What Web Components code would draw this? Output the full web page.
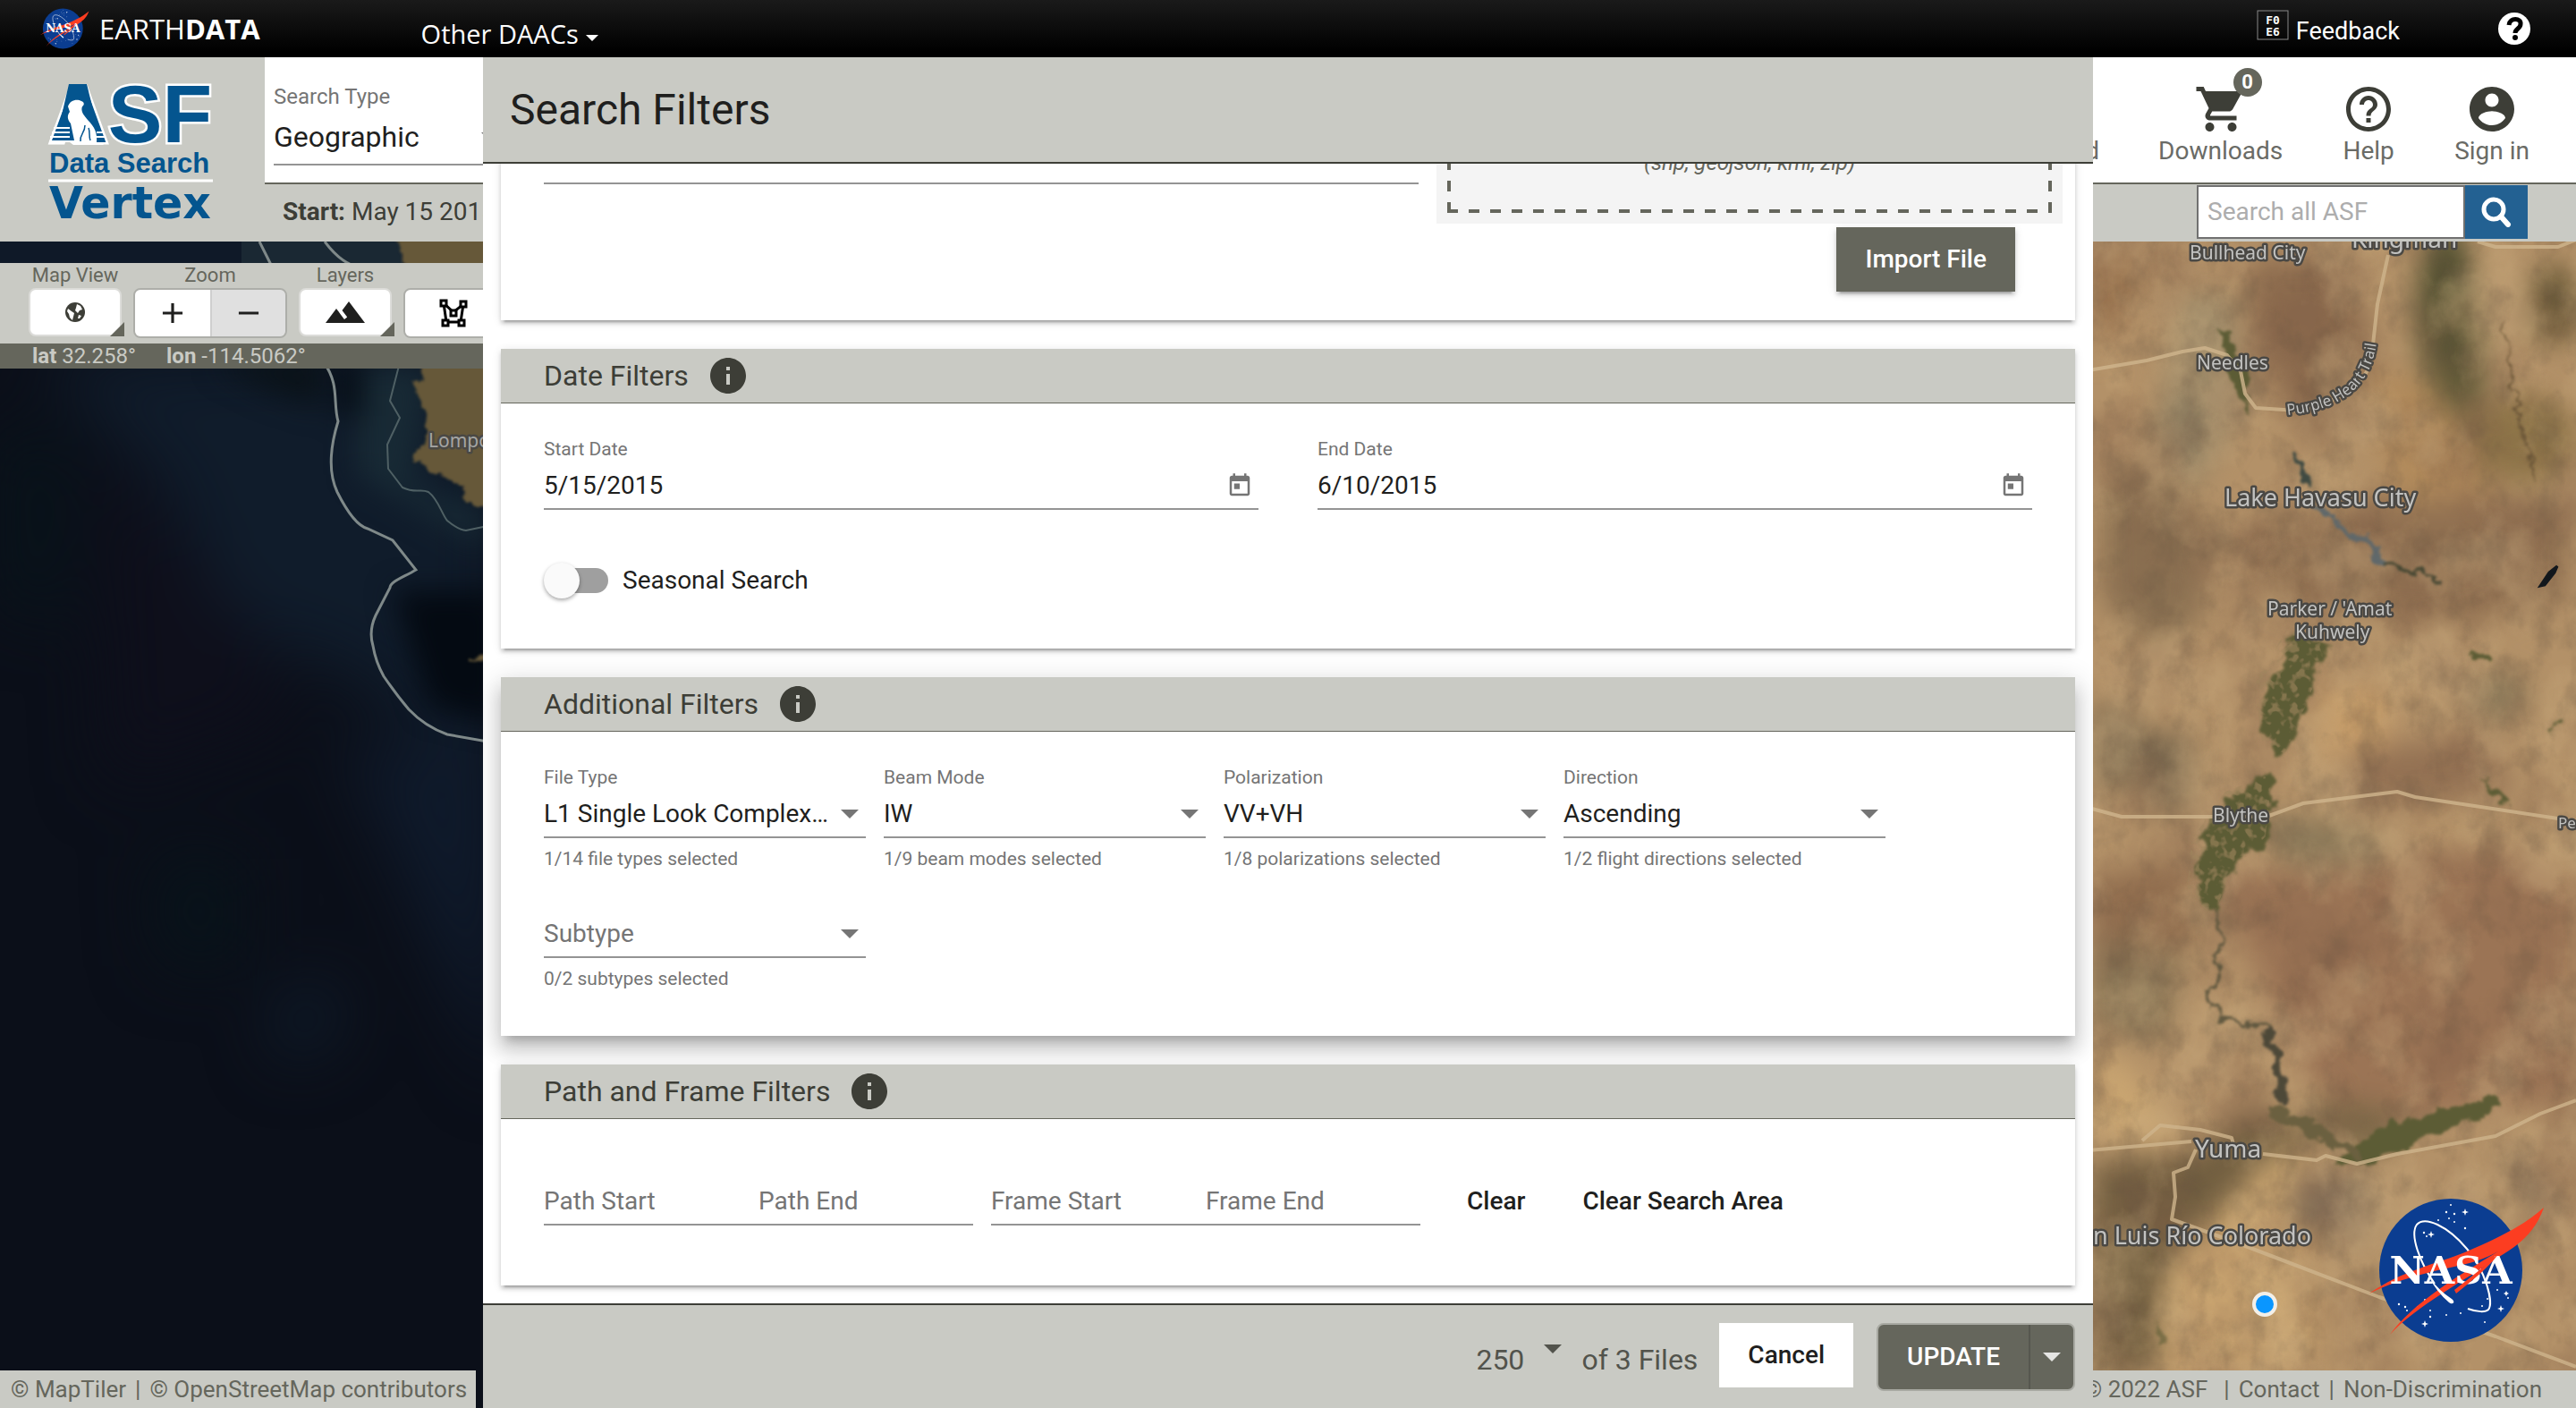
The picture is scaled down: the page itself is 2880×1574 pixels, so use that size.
<!DOCTYPE html>
<html lang="en">
<head>
<meta charset="utf-8">
<title>ASF Data Search Vertex</title>
<style>
  html, body { margin: 0; height: 100%; }
  body {
    font-family: Roboto, "Liberation Sans", sans-serif;
    font-size: 28px;
    line-height: 32px;
    color: #1f1f1e;
    overflow: hidden;
    --grey: #c9cac4;
    --olive: #65665c;
    --dark: #3d3e37;
    --muted: #757575;
    --rule: #949494;
  }
</style>
</head>
<body>
<vertex-app></vertex-app>
<script>
const reset = `*,*::before{box-sizing:border-box}button,input,select{font:inherit;color:inherit;margin:0;padding:0;border:0;background:none;border-radius:0;appearance:none;outline:0}a{color:inherit;text-decoration:none}svg{display:block}h1,h2,p{margin:0;font-weight:400}`;

function define(name, render) {
  customElements.define(name, class extends HTMLElement {
    constructor() { super(); this.attachShadow({ mode: "open" }); }
    connectedCallback() {
      const tpl = document.createElement("template");
      tpl.innerHTML = `<style>${reset}</style>` + render(this);
      this.shadowRoot.replaceChildren(tpl.content.cloneNode(true));
    }
  });
}

const icons = {
  cart: "M7 18c-1.1 0-1.99.9-1.99 2S5.9 22 7 22s2-.9 2-2-.9-2-2-2zM1 2v2h2l3.6 7.59-1.35 2.45c-.16.28-.25.61-.25.96 0 1.1.9 2 2 2h12v-2H7.42c-.14 0-.25-.11-.25-.25l.03-.12.9-1.63h7.45c.75 0 1.41-.41 1.75-1.03l3.58-6.49A1.003 1.003 0 0 0 20 4H5.21l-.94-2H1zm16 16c-1.1 0-1.99.9-1.99 2s.89 2 1.99 2 2-.9 2-2-.9-2-2-2z",
  help: "M11 18h2v-2h-2v2zm1-16C6.48 2 2 6.48 2 12s4.48 10 10 10 10-4.48 10-10S17.52 2 12 2zm0 18c-4.41 0-8-3.59-8-8s3.59-8 8-8 8 3.59 8 8-3.59 8-8 8zm0-14c-2.21 0-4 1.79-4 4h2c0-1.1.9-2 2-2s2 .9 2 2c0 2-3 1.75-3 5h2c0-2.25 3-2.5 3-5 0-2.21-1.79-4-4-4z",
  person: "M12 2C6.48 2 2 6.48 2 12s4.48 10 10 10 10-4.48 10-10S17.52 2 12 2zm0 3c1.66 0 3 1.34 3 3s-1.34 3-3 3-3-1.34-3-3 1.34-3 3-3zm0 14.2c-2.5 0-4.71-1.28-6-3.22.03-1.99 4-3.08 6-3.08 1.99 0 5.97 1.09 6 3.08-1.29 1.94-3.5 3.22-6 3.22z",
  info: "M12 2C6.48 2 2 6.48 2 12s4.48 10 10 10 10-4.48 10-10S17.52 2 12 2zm1 15h-2v-6h2v6zm0-8h-2V7h2v2z",
  today: "M19 3h-1V1h-2v2H8V1H6v2H5c-1.11 0-1.99.9-1.99 2L3 19c0 1.1.89 2 2 2h14c1.1 0 2-.9 2-2V5c0-1.1-.9-2-2-2zm0 16H5V8h14v11zM7 10h5v5H7z",
  add: "M19 13h-6v6h-2v-6H5v-2h6V5h2v6h6v2z",
  remove: "M19 13H5v-2h14v2z",
  terrain: "M14 6l-3.75 5 2.85 3.8-1.6 1.2C9.81 13.75 7 10 7 10l-6 8h22L14 6z"
};
const icon = (n, s, c = "currentColor") => `<svg class="icon" width="${s}" height="${s}" viewBox="0 0 24 24" fill="${c}" aria-hidden="true"><path d="${icons[n]}"/></svg>`;
const arrow = `<svg class="arrow" width="20" height="10" viewBox="0 0 20 10" fill="currentColor" aria-hidden="true"><path d="M0 0h20L10 10z"/></svg>`;

define("nasa-logo", () => `
<style>:host{display:block}svg{width:100%;height:100%;overflow:visible}</style>
<svg viewBox="0 0 200 164" role="img" aria-label="NASA">
  <circle cx="94" cy="82" r="80" fill="#0b3d91"/>
  <g fill="#fff">
    <circle cx="94" cy="9" r="1"/><circle cx="89" cy="17" r="1.2"/><circle cx="98" cy="19" r="1.2"/><circle cx="80" cy="26" r="1"/><circle cx="92" cy="24" r="1"/><circle cx="98" cy="28" r="1"/><circle cx="110" cy="35" r="1.2"/><circle cx="64" cy="40" r="1.2"/><circle cx="67" cy="44" r="1"/>
    <path d="M110 13l1 3 3 1-3 1-1 3-1-3-3-1 3-1zM72 38l1 3 3 1-3 1-1 3-1-3-3-1 3-1zM65 138l1 3 3 1-3 1-1 3-1-3-3-1 3-1zM150 121l1 3 3 1-3 1-1 3-1-3-3-1 3-1zM156 105l1 2 2 1-2 1-1 2-1-2-2-1 2-1z"/>
    <circle cx="36" cy="120" r="1.2"/><circle cx="43" cy="123" r="1.2"/><circle cx="45" cy="127" r="1"/><circle cx="57" cy="123" r="1"/><circle cx="65" cy="115" r="1"/><circle cx="71" cy="127" r="1"/><circle cx="71" cy="134" r="1.2"/><circle cx="89" cy="132" r="1"/><circle cx="105" cy="130" r="1"/><circle cx="132" cy="140" r="1"/><circle cx="129" cy="122" r="1"/><circle cx="135" cy="114" r="1"/><circle cx="146" cy="104" r="1"/><circle cx="158" cy="113" r="1"/>
  </g>
  <path d="M113 125c11 4 20 4 23 1 6-7-2-42-24-68S65 21 56 31c-8 11 3 42 20 66" fill="none" stroke="#fff" stroke-width="2"/>
  <path d="M3 108C40 82 76 76 112 61c40-17 66-31 86-49-10 28-27 41-50 55C112 92 55 122 26 154c25-35 76-66 134-101-36 24-56 22-92 32-27 7-45 13-65 23z" fill="#fc3d21"/>
  <path d="M70 90q11 15 25 24c5 4 1 7-3 4Q78 106 70 90z" fill="#fff"/>
  <text x="94" y="97" text-anchor="middle" font-family="DejaVu Serif,serif" font-weight="700" font-size="43" fill="#fff">NASA</text>
  <path d="M98 104C120 87 140 72 152 57c-14 22-34 36-52 51z" fill="#fc3d21"/>
</svg>`);

define("top-bar", () => `
<style>
:host{display:flex;align-items:center;height:64px;flex:none;padding:0 50px 0 44px;background:linear-gradient(#1a1a1a,#000 90%);color:#fff;font-family:"Open Sans",sans-serif}
nasa-logo{width:56px;height:46px;margin-right:11px}
.brand{font-size:31px;margin-right:180px}
.daac{display:flex;align-items:center;gap:8px;padding-top:12px;font-size:29px}
.daac svg{margin-top:8px}
.fb{margin-left:auto;display:flex;gap:8px;align-items:center;font-family:Roboto,sans-serif;font-size:27px}
.fb span{padding-top:6px}.fb svg{margin-bottom:8px}
.q{margin-left:110px}
</style>
<nasa-logo></nasa-logo>
<a class="brand" href="#">EARTH<b>DATA</b></a>
<button class="daac">Other DAACs <svg width="14" height="7" viewBox="0 0 14 7" fill="#fff"><path d="M0 0h14L7 7z"/></svg></button>
<a class="fb" href="#"><svg width="36" height="34" viewBox="0 0 36 34"><rect x="1" y="1" width="34" height="32" fill="none" stroke="#888"/><text x="18" y="16" text-anchor="middle" fill="#fff" font-family="DejaVu Sans Mono,monospace" font-weight="700" font-size="13">F0</text><text x="18" y="29" text-anchor="middle" fill="#fff" font-family="DejaVu Sans Mono,monospace" font-weight="700" font-size="13">E6</text></svg><span>Feedback</span></a>
<button class="q" aria-label="Help"><svg width="37" height="37" viewBox="0 0 37 37"><circle cx="18" cy="18" r="18" fill="#fff"/><path d="M12 14c1-9 14-8 13-1 0 5-6 5-6 10" fill="none" stroke="#000" stroke-width="5"/><circle cx="19" cy="28" r="3" fill="#000"/></svg></button>`);

define("vertex-logo", () => `
<style>:host{display:block}</style>
<svg width="200" height="190" viewBox="0 -16 200 190" role="img" aria-label="ASF Data Search Vertex">
  <g fill="#04558f">
    <text x="3" y="71" font-family="Liberation Sans,sans-serif" font-weight="700" font-size="91" stroke="#fff" stroke-width="5" paint-order="stroke">ASF</text>
    <path d="M25 6h20l16 65H10z"/>
    <text x="3" y="105" font-family="Liberation Sans,sans-serif" font-weight="700" font-size="31">Data Search</text>
    <text x="3" y="156" font-family="DejaVu Sans,sans-serif" font-weight="700" font-size="49">Vertex</text>
  </g>
  <path d="M2 114h184" stroke="#fff" stroke-width="3"/>
  <path d="M8 55h18M6 60h20M4 65h22M3 70h28M56 60h8M56 65h10" stroke="#fff" stroke-width="2"/>
  <path d="M24 31c2-7 10-9 15-6 3 1 4 4 1 6-2 5 1 9 6 15 8 8 11 15 10 25h6l2 3H30l-4-3 5-2-4-19c-4-5-4-9-1-13z" fill="#fff"/>
  <path d="M38 70c-1-8 5-9 5-18M47 55c2 5 0 9 2 14" stroke="#04558f" stroke-width="1.5" fill="none"/>
</svg>`);

define("site-header", () => `
<style>
:host{display:flex;flex:none;background:var(--grey)}
.logo{width:296px;padding:8px 0 0 52px}
.main{flex:1;min-width:0}
.row1{display:flex;justify-content:space-between;height:142px;background:#fff;border-bottom:2px solid var(--olive)}
.type{display:block;width:270px;padding:30px 0 0 10px;color:var(--muted);font-size:24px;line-height:28px}
.sel{display:grid;align-items:center;margin-top:13px;padding-bottom:12px;border-bottom:2px solid var(--rule)}
.sel select{grid-area:1/1;font-size:32px;line-height:36px;height:36px;color:#1f1f1e}
.sel .arrow{grid-area:1/1;justify-self:end;margin-right:8px}
nav{display:flex;gap:66px;padding:28px 52px 0 0;color:#6a6b66}
nav a{display:flex;flex-direction:column;align-items:center;gap:1px;position:relative}
nav svg{color:var(--dark)}
.badge{position:absolute;left:50%;top:-16px;margin-left:14px;width:32px;height:32px;border-radius:50%;background:var(--olive);color:#fff;font-size:22px;font-weight:700;text-align:center}
.row2{display:flex;justify-content:space-between;align-items:center;height:64px;padding:0 54px 2px 20px;color:var(--dark)}
form{display:flex;height:60px}
input{width:300px;background:#fff;border:2px solid #707070;padding:0 10px}
input::placeholder{color:#adadad;opacity:1}
form button{width:70px;background:#236192;display:grid;place-items:center}
</style>
<div class="logo"><vertex-logo></vertex-logo></div>
<div class="main">
  <div class="row1">
    <label class="type">Search Type<span class="sel"><select><option>Geographic</option></select>${arrow}</span></label>
    <nav>
      <a href="#">${icon("person", 60)}On Demand</a>
      <a href="#">${icon("cart", 60)}<span class="badge">0</span>Downloads</a>
      <a href="#">${icon("help", 60)}Help</a>
      <a href="#">${icon("person", 60)}Sign in</a>
    </nav>
  </div>
  <div class="row2">
    <p><b>Start:</b> May 15 2015</p>
    <form><input type="text" placeholder="Search all ASF" aria-label="Search all ASF"><button type="button" aria-label="Search"><svg width="34" height="34" viewBox="0 0 34 34" fill="none" stroke="#fff"><circle cx="14" cy="14" r="11" stroke-width="5"/><path d="M22 22l8 9" stroke-width="6" stroke-linecap="round"/></svg></button></form>
  </div>
</div>`);

define("map-art", () => `
<style>:host{display:block}svg{width:100%;height:100%}filter{color-interpolation-filters:sRGB}text{font-family:"Noto Sans","Open Sans",sans-serif;fill:#c2c2c0;stroke:#4a4844;stroke-width:5px;paint-order:stroke;stroke-linejoin:round}</style>
<svg viewBox="0 270 2880 1304" preserveAspectRatio="xMidYMid slice" aria-label="Satellite map">
  <defs>
    <filter id="b30" x="-50%" y="-50%" width="200%" height="200%"><feGaussianBlur stdDeviation="16"/></filter>
    <filter id="b60" x="-50%" y="-50%" width="200%" height="200%"><feGaussianBlur stdDeviation="36"/></filter>
    <filter id="rough" x="-20%" y="-20%" width="140%" height="140%"><feTurbulence type="fractalNoise" baseFrequency=".05" numOctaves="4" seed="4" result="n"/><feDisplacementMap in="SourceGraphic" in2="n" scale="24" xChannelSelector="R" yChannelSelector="G"/><feGaussianBlur stdDeviation="1.5"/></filter>
    <filter id="patch" x="0" y="0" width="100%" height="100%"><feTurbulence type="fractalNoise" baseFrequency=".011 .009" numOctaves="6" seed="11"/><feColorMatrix values="0 0 0 0 .5  0 0 0 0 .37  0 0 0 0 .28  3.4 0 0 0 -1.5"/></filter>
    <filter id="light" x="0" y="0" width="100%" height="100%"><feTurbulence type="fractalNoise" baseFrequency=".012 .01" numOctaves="6" seed="29"/><feColorMatrix values="0 0 0 0 .8  0 0 0 0 .68  0 0 0 0 .5  0 3.4 0 0 -1.5"/></filter>
    <filter id="grain" x="0" y="0" width="100%" height="100%"><feTurbulence type="fractalNoise" baseFrequency=".03 .022" numOctaves="5" seed="3"/><feColorMatrix values="0 0 0 0 .38  0 0 0 0 .31  0 0 0 0 .24  0 3 0 0 -1.4"/></filter>
    <filter id="field" x="-10%" y="-10%" width="120%" height="120%"><feTurbulence type="fractalNoise" baseFrequency=".1" numOctaves="2" seed="8"/><feColorMatrix values="0 0 0 0 .62  0 0 0 0 .52  0 0 0 0 .37  0 6 0 0 -3" result="n"/><feComposite in="n" in2="SourceGraphic" operator="in"/></filter>
    <clipPath id="cl"><rect x="0" y="270" width="1400" height="1304"/></clipPath>
    <clipPath id="cr"><rect x="2300" y="270" width="580" height="1304"/></clipPath>
  </defs>
  <g clip-path="url(#cl)">
    <rect y="270" width="1400" height="1304" fill="#0b0f19"/>
    <g filter="url(#b60)">
      <path d="M40 400L560 380V900L400 760 260 700 180 540z" fill="#101c2b"/>
      <path d="M380 820L560 860v360z" fill="#0f1a2b"/>
      <path d="M0 470L80 500 70 700 0 680zM170 960h100v120h-90z" fill="#08131a"/>
      <path d="M100 500l120 120 120 180-220 80z" fill="#0e0f1b"/>
      <path d="M300 1130l70-40 10 60-60 40z" fill="#0f1c2b"/>
    </g>
    <g filter="url(#b30)">
      <path d="M240 405L360 395v60l-60-20z" fill="#0a1218"/>
      <path d="M400 411h80l-20 130 80 30v40L400 530z" fill="#182a35"/>
      <path d="M440 660h120v150l-80-20z" fill="#040a12"/>
      <path d="M380 405h25v60h-25z" fill="#040a12"/>
    </g>
    <rect x="0" y="270" width="540" height="26" fill="#0f1928"/>
    <rect x="270" y="270" width="180" height="26" fill="#1a2833"/>
    <g fill="#665839" filter="url(#rough)"><path d="M438 252h120v60h-95zM476 390L465 435 478 466 464 518 506 536 522 564H600V390zM524 737q12-10 40-4v8z"/></g>
    <g fill="none" stroke="#7f8989" stroke-width="3">
      <path d="M290 270L303 296M363 270C378 290 390 296 403 300"/>
      <path d="M362 405C380 430 372 450 378 471C366 510 370 535 377 550C388 572 400 588 411 591L439 604 465 637C452 645 436 650 436 657L420 688Q412 705 417 722 420 740 429 756C440 772 446 780 457 793Q475 812 500 821L545 829"/>
      <path d="M447 405L436 448 447 467 433 497 434 524 450 545C465 552 470 546 479 550 490 558 494 575 500 582Q512 592 521 593L545 588" stroke="#4f6064" stroke-width="2"/>
    </g>
    <text x="479" y="500" font-size="21" style="fill:#a5a5a3">Lompoc</text>
  </g>
  <g clip-path="url(#cr)">
    <rect x="2300" y="270" width="580" height="1304" fill="#b39168"/>
    <g filter="url(#b30)">
      <path d="M2350 540l50-30 70 80-10 110-60 30-50-60z" fill="#8b7152"/>
      <path d="M2510 290l110 0 40 110-60 110-50-60-30-80z" fill="#8b6a4d"/>
      <path d="M2340 280h60v60l-60 60z" fill="#946e4b"/>
      <path d="M2440 330l50 0 20 120-60 100-40-60z" fill="#958465"/>
      <path d="M2650 420h110l30 160-110 10z" fill="#b18a5b"/>
      <path d="M2480 590l190-30 200 0v110l-120 30-200-20z" fill="#907051"/>
      <path d="M2600 760h70v90l-80 5z" fill="#c59c69"/>
      <path d="M2620 840l160-20 30 70-190 10z" fill="#937153"/>
      <path d="M2340 790h50v90h-50zM2390 820h60v90l-50-10z" fill="#7b694f"/>
      <path d="M2520 910l120 10 40 50-40 20-90-30z" fill="#8b7959"/>
      <path d="M2480 980L2800 950 2880 990V1230L2640 1260 2560 1180z" fill="#9b7455"/>
      <path d="M2340 980l100-20 20 90-110 40z" fill="#906d4e"/>
      <path d="M2340 1050l100 20-20 90-80-10z" fill="#887555"/>
      <path d="M2340 1170l40 20 60 90-100-10z" fill="#c9a571"/>
      <path d="M2340 1300l110-10 70-50 60 30-50 90-90 20-30 150h-70z" fill="#715e40"/>
      <path d="M2420 1420l120-130 60 0v240h-190z" fill="#c9a470"/>
      <path d="M2570 1310l80 10-10 70-80-20zM2790 1270l60 60-10 40z" fill="#83715a"/>
      <path d="M2590 1230l90 10-10 50-90-20z" fill="#7a6747"/>
      <ellipse cx="2735" cy="345" rx="32" ry="95" fill="#4f4e2f"/><ellipse cx="2752" cy="400" rx="26" ry="70" fill="#5b5735"/>
      <ellipse cx="2855" cy="340" rx="30" ry="45" fill="#6a5a38"/><ellipse cx="2820" cy="490" rx="60" ry="50" fill="#8d7448"/>
      <ellipse cx="2790" cy="780" rx="35" ry="25" fill="#887758"/>
    </g>
    <rect x="2300" y="270" width="580" height="1304" filter="url(#patch)" opacity=".32"/>
    <rect x="2300" y="270" width="580" height="1304" filter="url(#light)" opacity=".38"/>
    <rect x="2300" y="270" width="580" height="1304" filter="url(#grain)" opacity=".25"/>
    <g fill="#5c5c35" filter="url(#rough)">
      <path d="M2562 712L2604 720 2584 774 2562 832 2546 844 2530 823 2530 765 2552 745z"/>
      <path d="M2540 865L2540 906 2533 935 2502 964 2481 1018 2456 998 2461 939 2493 890z"/>
      <path d="M2478 370l10 20 8 40 18 30-4-40-18-50z"/>
      <path d="M2612 1298l40-34 130-38 14 12-110 45-50 22z"/>
      <path d="M2766 728h18v10h-18zM2772 870l34 26-8 4zM2852 818l12-16v9z"/>
      <path d="M2412 1476l12 26-12 2z" opacity=".6"/>
    </g>
    <path d="M2556 705L2605 715 2580 784 2554 842 2530 834 2520 765zM2540 865L2533 935 2495 974 2474 1024 2445 998 2450 939 2488 885z" fill="#fff" filter="url(#field)" opacity=".6"/>
    <g fill="none" filter="url(#rough)" stroke-linecap="round">
      <path d="M2478 1015L2482 1060 2478 1100 2471 1112 2483 1138 2533 1147 2545 1175" stroke="#5f573f" stroke-width="4"/>
      <path d="M2534 1155l12 20 4 55" stroke="#4d4838" stroke-width="10"/>
      <path d="M2545 1242l40 20 50 30" stroke="#6b6040" stroke-width="14"/>
      <path d="M2567 505L2582 540" stroke="#3f4a42" stroke-width="5"/>
      <path d="M2584 560L2624 590 2669 630" stroke="#60686a" stroke-width="7"/>
      <path d="M2669 630l60 18" stroke="#464733" stroke-width="4"/>
      <path d="M2800 360l20 120 12 60" stroke="#6b5638" stroke-width="2"/>
    </g>
    <g fill="none" stroke="#cfb58d" stroke-width="4" stroke-linejoin="round" opacity=".8">
      <path d="M2335 414L2400 403 2440 393 2465 389 2490 397 2505 415 2510 440 2522 456 2570 459Q2655 440 2653 385L2658 340 2670 285"/>
      <path d="M2770 270L2790 276 2860 276 2880 268"/>
      <path d="M2335 903L2372 913H2534L2575 898 2680 885 2700 891 2880 918"/>
      <path d="M2335 1286L2450 1276M2395 1275L2415 1258 2460 1263 2495 1272 2500 1290M2530 1290L2590 1297 2600 1292 2635 1301 2680 1290 2790 1270 2840 1245 2880 1230"/>
      <path d="M2455 1285L2446 1305 2430 1311 2432 1338 2428 1363 2500 1389 2660 1450 2790 1494 2880 1528"/>
    </g>
    <path d="M2840 655l10-15 9-7-3 7-11 14z" fill="#12171c" stroke="#12171c" stroke-width="3"/>
    <text x="2448" y="290" font-size="21">Bullhead City</text>
    <text x="2629" y="277" font-size="28">Kingman</text>
    <text x="2456" y="413" font-size="21">Needles</text>
    <path id="trail" d="M2557 464C2620 458 2656 430 2658 370" fill="none"/>
    <text font-size="17"><textPath href="#trail">Purple Heart Trail</textPath></text>
    <text x="2487" y="566" font-size="27">Lake Havasu City</text>
    <text x="2535" y="688" font-size="21">Parker /  'Amat</text>
    <text x="2566" y="714" font-size="21">Kuhwely</text>
    <text x="2474" y="919" font-size="21">Blythe</text>
    <text x="2860" y="926" font-size="17">Peo</text>
    <text x="2454" y="1294" font-size="28">Yuma</text>
    <text x="2584" y="1391" text-anchor="end" font-size="27">San Luis Río Colorado</text>
    <circle cx="2532" cy="1458" r="12" fill="#0a96ff" stroke="#f3efe8" stroke-width="4"/>
  </g>
</svg>`);

define("map-area", () => `
<style>
:host{display:flex;flex:1;min-height:0;flex-direction:column;position:relative;padding-top:24px}
map-art{position:absolute;inset:0}
.tools,.coords,.foot{position:relative}
.tools{display:flex;gap:13px;width:50%;height:90px;padding:1px 0 0 32px;background:var(--grey);color:var(--olive);font-size:22px;line-height:26px}
.g{display:flex;flex-direction:column;align-items:center;gap:1px}
.b{display:grid;place-items:center;width:104px;height:54px;background:#fff;border:2px solid #dcdcd9;border-radius:8px;color:#1f1f1e}
.corner{position:relative}.corner::after{content:"";position:absolute;right:-5px;bottom:-2px;border-style:solid;border-width:0 0 16px 16px;border-color:transparent transparent var(--olive)}
.pair{display:flex;height:56px;border:2px solid #adaea9;border-radius:8px;overflow:hidden}
.pair .b{width:84px;height:52px;border:0;border-radius:0}.pair .b+.b{background:#e0e0e0;border-left:2px solid #cfcfcf}
.pair .wide{width:108px}
.coords{display:flex;gap:34px;width:50%;height:28px;padding-left:36px;background:var(--olive);color:var(--grey);font-size:24px;line-height:28px}
.foot{display:flex;justify-content:space-between;align-items:flex-end;margin-top:auto;font-size:26px;line-height:42px;color:var(--olive)}
.foot>p{display:flex;gap:10px;background:var(--grey);padding:0 10px 0 12px;white-space:nowrap}
.foot>p:last-child{flex:none;width:20%;justify-content:flex-end;padding-right:38px}
.owner{margin-right:8px}
.nasa{position:absolute;right:34px;bottom:72px;width:200px;height:164px}
</style>
<map-art></map-art>
<div class="tools">
  <div class="g">Map View<button class="b corner" aria-label="Map view"><svg width="24" height="24" viewBox="0 0 24 24"><circle cx="12" cy="12" r="11" fill="#3d3e37"/><path d="M14 3l4 2 2 4-3 1-2 3-3-3 1-3zM4 8l4 3 3 2-1 4-1 4-3-3-1-4-2-3zM16 15l3 1-2 3-2 0z" fill="#fff"/></svg></button></div>
  <div class="g">Zoom<span class="pair"><button class="b" aria-label="Zoom in">${icon("add", 38)}</button><button class="b" aria-label="Zoom out">${icon("remove", 38)}</button></span></div>
  <div class="g">Layers<button class="b corner" aria-label="Layers">${icon("terrain", 48)}</button></div>
  <div class="g"><span>&nbsp;</span><span class="pair"><button class="b wide" aria-label="Draw"><svg width="32" height="32" viewBox="0 0 32 32" fill="#fff" stroke="#000" stroke-width="3"><path d="M5 5l3 21h16l3-20-11 9z"/><path d="M2 2h6v6H2zM24 3h6v6h-6zM13 13h6v6h-6zM4 24h6v6H4zM22 24h6v6h-6z"/></svg></button></span></div>
</div>
<div class="coords"><span><b>lat</b> 32.258°</span><span><b>lon</b> -114.5062°</span></div>
<nasa-logo class="nasa"></nasa-logo>
<div class="foot"><p><a href="#">© MapTiler</a><span>|</span><a href="#">© OpenStreetMap contributors</a></p><p><span class="owner">© 2022 ASF</span><span>|</span><a href="#">Contact</a><span>|</span><a href="#">Non-Discrimination</a></p></div>`);

const fieldCss = `
:host{display:block}
label,.hint{display:block;min-height:24px;font-size:21px;line-height:24px;color:var(--muted)}
.line{display:grid;grid-template-columns:1fr;align-items:center;margin-top:12px;height:44px;padding-bottom:9px;border-bottom:2px solid var(--rule)}
.line>*{grid-area:1/1;min-width:0}
input,select{width:100%;height:32px;line-height:32px}
.hint{margin-top:11px}`;

define("select-field", el => {
  const floating = el.getAttribute("label"), empty = el.hasAttribute("empty");
  return `<style>${fieldCss}:host{width:360px}.arrow{justify-self:end;margin-right:8px;color:var(--muted);pointer-events:none}.empty{color:var(--muted)}</style>
  <label for="s">${empty ? "" : floating}</label>
  <div class="line"><select id="s" class="${empty ? "empty" : ""}" aria-label="${floating}"><option>${empty ? floating : el.getAttribute("value")}</option></select>${arrow}</div>
  <p class="hint">${el.getAttribute("hint")}</p>`;
});

define("date-field", el => `<style>${fieldCss}:host{flex:1}button{justify-self:end;margin-right:6px;color:var(--muted)}</style>
  <label for="d">${el.getAttribute("label")}</label>
  <div class="line"><input id="d" type="text" value="${el.getAttribute("value")}"><button aria-label="Open calendar">${icon("today", 30)}</button></div>`);

define("range-field", el => `<style>:host{display:flex;width:480px;height:45px;border-bottom:2px solid var(--rule)}input{width:50%;height:34px}input::placeholder{color:var(--muted);opacity:1}</style>
  <input type="text" placeholder="${el.getAttribute("name")} Start" aria-label="${el.getAttribute("name")} Start"><input type="text" placeholder="${el.getAttribute("name")} End" aria-label="${el.getAttribute("name")} End">`);

define("filter-card", el => `<style>
:host{display:block;flex:none;background:#fff;box-shadow:0 6px 2px -4px rgba(0,0,0,.2),0 4px 4px rgba(0,0,0,.14),0 2px 10px rgba(0,0,0,.12)}
:host([raised]){box-shadow:0 10px 10px -6px rgba(0,0,0,.2),0 16px 20px 2px rgba(0,0,0,.14),0 6px 28px 4px rgba(0,0,0,.12)}
header{display:flex;align-items:center;gap:20px;height:61px;padding-left:48px;background:var(--grey);border-bottom:1px solid var(--olive);color:var(--dark)}
h2{font-size:32px;line-height:40px}
.body{padding:0 48px}
</style>${el.hasAttribute("heading") ? `<header><h2>${el.getAttribute("heading")}</h2><button aria-label="About ${el.getAttribute("heading")}">${icon("info", 48)}</button></header>` : ""}<div class="body"><slot></slot></div>`);

define("filter-dialog", () => `<style>
:host{position:absolute;top:64px;bottom:0;left:0;right:0;margin:0 auto;width:62.5%;display:flex;flex-direction:column;background:#fff}
.head{flex:none;height:119px;padding:31px 30px 0;background:var(--grey);border-bottom:2px solid var(--dark)}
h1{font-size:48px;line-height:56px}
.scroll{flex:1;min-height:0;display:flex;flex-direction:column;justify-content:flex-end;gap:32px;padding:0 20px 20px;overflow:hidden}
.area{display:flex;align-items:flex-end;gap:20px;padding-bottom:32px;margin-right:-34px}
.area>.in{flex:1;margin-bottom:120px;height:60px;border-bottom:2px solid var(--rule)}
.drop{width:700px;display:flex;flex-direction:column;gap:4px}
.zone{background:#f4f4f4;padding:12px}
.zone p{height:150px;display:flex;align-items:flex-end;justify-content:center;padding-bottom:40px;font-size:24px;font-style:italic;color:var(--olive);
  --h:repeating-linear-gradient(90deg,var(--olive) 0 12px,transparent 12px 24px);--v:repeating-linear-gradient(0deg,var(--olive) 0 12px,transparent 12px 24px);
  background:var(--h) 0 100%/100% 4px no-repeat,var(--v) 0 0/4px 100% no-repeat,var(--v) 100% 0/4px 100% no-repeat}
.btn{height:72px;padding:0 32px;font-weight:500}
.import{align-self:flex-end;margin-right:53px;background:var(--olive);color:#fff;box-shadow:0 6px 2px -4px rgba(0,0,0,.2),0 4px 4px rgba(0,0,0,.14),0 2px 10px rgba(0,0,0,.12)}
.dates{display:flex;gap:66px;padding-top:39px}
.toggle{display:flex;align-items:center;gap:16px;margin:58px 0 56px}
.toggle input{width:72px;height:41px;display:flex;align-items:center;position:relative}
.toggle input::after{content:"";position:absolute;inset:7px 0 6px 4px;border-radius:14px;background:#9f9f9f}
.toggle input::before{content:"";position:relative;z-index:1;width:40px;height:40px;border-radius:50%;background:#fafafa;box-shadow:0 2px 4px rgba(0,0,0,.35)}
.grid{display:flex;flex-wrap:wrap;gap:19px 20px;padding:39px 0 52px}
.path{display:flex;gap:20px;padding:74px 0 67px}
.path .btn{height:36px}.acts{display:flex}
.foot{flex:none;display:flex;justify-content:flex-end;align-items:flex-start;height:117px;padding:20px 20px 0;background:var(--grey);border-top:2px solid var(--dark)}
.count{display:flex;padding-top:21px;gap:22px;font-size:32px;line-height:40px;color:#52534c;margin-right:24px}
.size{display:grid}.size>*{grid-area:1/1}.size select{width:96px;height:40px}.size .arrow{justify-self:end;margin-top:3px}
.cancel{background:#fff;margin-right:26px}
.upd{display:flex;height:76px;border:2px solid #a8a9a2;border-radius:8px;overflow:hidden;background:var(--olive);color:#fff}
.upd .btn{border-right:2px solid #56574f}
.upd .more{width:48px;display:grid;place-items:center;color:#e6e6e4}
</style>
<div class="head"><h1>Search Filters</h1></div>
<div class="scroll">
  <filter-card><div class="area"><input class="in" type="text" aria-label="Area of interest"><div class="drop"><div class="zone"><p>(shp, geojson, kml, zip)</p></div><button class="btn import">Import File</button></div></div></filter-card>
  <filter-card heading="Date Filters">
    <div class="dates"><date-field label="Start Date" value="5/15/2015"></date-field><date-field label="End Date" value="6/10/2015"></date-field></div>
    <label class="toggle"><input type="checkbox" role="switch">Seasonal Search</label>
  </filter-card>
  <filter-card heading="Additional Filters" raised>
    <div class="grid">
      <select-field label="File Type" value="L1 Single Look Complex…" hint="1/14 file types selected"></select-field>
      <select-field label="Beam Mode" value="IW" hint="1/9 beam modes selected"></select-field>
      <select-field label="Polarization" value="VV+VH" hint="1/8 polarizations selected"></select-field>
      <select-field label="Direction" value="Ascending" hint="1/2 flight directions selected"></select-field>
      <select-field label="Subtype" empty hint="0/2 subtypes selected"></select-field>
    </div>
  </filter-card>
  <filter-card heading="Path and Frame Filters">
    <div class="path"><range-field name="Path"></range-field><range-field name="Frame"></range-field><div class="acts"><button class="btn">Clear</button><button class="btn">Clear Search Area</button></div></div>
  </filter-card>
</div>
<div class="foot">
  <div class="count"><span class="size"><select aria-label="Max results"><option>250</option></select>${arrow}</span><span>of 3 Files</span></div>
  <button class="btn cancel">Cancel</button>
  <div class="upd"><button class="btn">UPDATE</button><button class="more" aria-label="More update options">${arrow}</button></div>
</div>`);

define("vertex-app", () => `<style>:host{display:flex;flex-direction:column;height:100vh;position:relative;overflow:hidden}</style>
<top-bar></top-bar><site-header></site-header><map-area></map-area><filter-dialog></filter-dialog>`);
</script>
</body>
</html>
